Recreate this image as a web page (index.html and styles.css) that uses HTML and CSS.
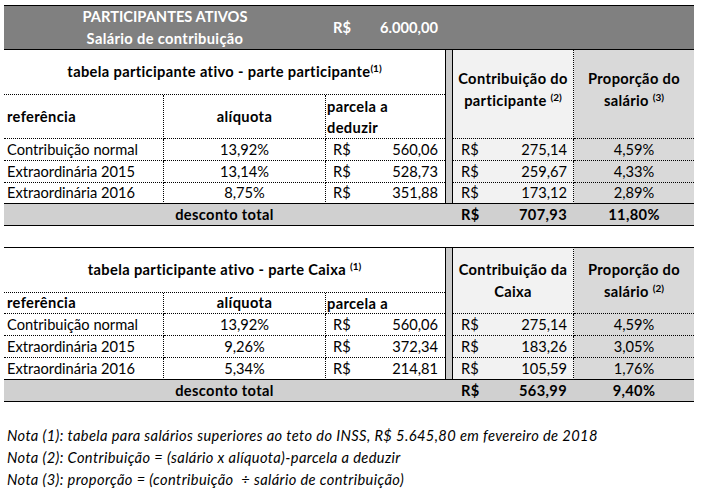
FILE: index.html
```html
<!DOCTYPE html>
<html lang="pt-BR">
<head>
<meta charset="utf-8">
<title>Participantes ativos</title>
<link rel="stylesheet" href="styles.css">
</head>
<body>
<div class="page">
  <div class="sheet t1">
    <div class="c band r1 span-ab center"><span>PARTICIPANTES ATIVOS<br><span class="wide">Salário de contribuição</span></span></div>
    <div class="c band r1 col-c money"><span>R$</span><span>6.000,00</span></div>
    <div class="c band r1 span-rest"></div>

    <div class="c r2 span-abc center bold dot-b"><span>tabela participante ativo - parte participante<sup class="ref">(1)</sup></span></div>
    <div class="c sep rows-2-7"></div>
    <div class="c col-d rows-2-4 head-d up center bold"><span>Contribuição do<br>participante <sup class="ref">(2)</sup></span></div>
    <div class="c col-e rows-2-4 head-e up center bold"><span>Proporção do<br>salário <sup class="ref">(3)</sup></span></div>

    <div class="c r3 col-a lbl bold dot-r dot-b">referência</div>
    <div class="c r3 col-b center bold dot-r dot-b">alíquota</div>
    <div class="c r3 col-c par bold dot-b"><span>parcela a<br>deduzir</span></div>

    <div class="c r4 col-a lbl dot-r dot-b">Contribuição normal</div>
    <div class="c r4 col-b center dot-r dot-b">13,92%</div>
    <div class="c r4 col-c money dot-b"><span>R$</span><span>560,06</span></div>
    <div class="c r4 col-d money2 dot-b"><span>R$</span><span>275,14</span></div>
    <div class="c r4 col-e prop dot-b">4,59%</div>

    <div class="c r5 col-a lbl dot-r dot-b">Extraordinária 2015</div>
    <div class="c r5 col-b center dot-r dot-b">13,14%</div>
    <div class="c r5 col-c money dot-b"><span>R$</span><span>528,73</span></div>
    <div class="c r5 col-d money2 dot-b"><span>R$</span><span>259,67</span></div>
    <div class="c r5 col-e prop dot-b">4,33%</div>

    <div class="c r6 col-a lbl dot-r solid-b">Extraordinária 2016</div>
    <div class="c r6 col-b center dot-r solid-b">8,75%</div>
    <div class="c r6 col-c money solid-b"><span>R$</span><span>351,88</span></div>
    <div class="c r6 col-d money2 solid-b"><span>R$</span><span>173,12</span></div>
    <div class="c r6 col-e prop solid-b">2,89%</div>

    <div class="c tot r7 span-abc center">desconto total</div>
    <div class="c tot r7 col-sep"></div>
    <div class="c tot r7 col-d money2t"><span>R$</span><span>707,93</span></div>
    <div class="c tot r7 col-e center">11,80%</div>
  </div>

  <div class="sheet t2">
    <div class="c r1 span-abc center bold dot-b top"><span>tabela participante ativo - parte Caixa <sup class="ref">(1)</sup></span></div>
    <div class="c sep rows-1-6 top"></div>
    <div class="c col-d rows-1-3 head-d center bold top"><span>Contribuição da<br>Caixa</span></div>
    <div class="c col-e rows-1-3 head-e center bold top"><span>Proporção do<br>salário <sup class="ref">(2)</sup></span></div>

    <div class="c r2 col-a lbl bold dot-r dot-b">referência</div>
    <div class="c r2 col-b center bold dot-r dot-b">alíquota</div>
    <div class="c r2 col-c par bold dot-b">parcela a</div>

    <div class="c r3 col-a lbl dot-r dot-b">Contribuição normal</div>
    <div class="c r3 col-b center dot-r dot-b">13,92%</div>
    <div class="c r3 col-c money dot-b"><span>R$</span><span>560,06</span></div>
    <div class="c r3 col-d money2 dot-b"><span>R$</span><span>275,14</span></div>
    <div class="c r3 col-e prop dot-b">4,59%</div>

    <div class="c r4 col-a lbl dot-r dot-b">Extraordinária 2015</div>
    <div class="c r4 col-b center dot-r dot-b">9,26%</div>
    <div class="c r4 col-c money dot-b"><span>R$</span><span>372,34</span></div>
    <div class="c r4 col-d money2 dot-b"><span>R$</span><span>183,26</span></div>
    <div class="c r4 col-e prop dot-b">3,05%</div>

    <div class="c r5 col-a lbl dot-r solid-b">Extraordinária 2016</div>
    <div class="c r5 col-b center dot-r solid-b">5,34%</div>
    <div class="c r5 col-c money solid-b"><span>R$</span><span>214,81</span></div>
    <div class="c r5 col-d money2 solid-b"><span>R$</span><span>105,59</span></div>
    <div class="c r5 col-e prop solid-b">1,76%</div>

    <div class="c tot r6 span-abc center">desconto total</div>
    <div class="c tot r6 col-sep"></div>
    <div class="c tot r6 col-d money2t"><span>R$</span><span>563,99</span></div>
    <div class="c tot r6 col-e center">9,40%</div>
  </div>

  <div class="notes">
    <p>Nota (1): tabela para salários superiores ao teto do INSS, R$ 5.645,80 em fevereiro de 2018</p>
    <p>Nota (2): Contribuição = (salário x alíquota)-parcela a deduzir</p>
    <p>Nota (3): proporção = (contribuição &nbsp;÷ salário de contribuição)</p>
  </div>
</div>
</body>
</html>
```

FILE: styles.css
```css
html, body {
  margin: 0;
  padding: 0;
  background: #ffffff;
}

body {
  font-family: Lato, "Liberation Sans", Arial, sans-serif;
  font-size: 14.67px;
  color: #000000;
}

.page {
  padding: 5px 0 0 4px;
}

.sheet {
  display: grid;
  grid-template-columns: 160px 162px 119px 8px 121px 120px;
  width: 690px;
}

.t1 {
  grid-template-rows: 45px 45px 44px 22px 22px 21px 22px;
}

.t2 {
  grid-template-rows: 46px 21px 22px 22px 22px 22px;
  margin-top: 21px;
}

.c {
  box-sizing: border-box;
  display: flex;
  align-items: center;
  overflow: hidden;
  white-space: nowrap;
  line-height: 22px;
}

/* rows */
.r1 { grid-row: 1; }
.r2 { grid-row: 2; }
.r3 { grid-row: 3; }
.r4 { grid-row: 4; }
.r5 { grid-row: 5; }
.r6 { grid-row: 6; }
.r7 { grid-row: 7; }
.rows-2-7 { grid-row: 2 / 7; }
.rows-2-4 { grid-row: 2 / 4; }
.rows-1-6 { grid-row: 1 / 6; }
.rows-1-3 { grid-row: 1 / 3; }

/* columns */
.col-a { grid-column: 1; }
.col-b { grid-column: 2; }
.col-c { grid-column: 3; }
.col-sep { grid-column: 4; }
.col-d { grid-column: 5; }
.col-e { grid-column: 6; }
.span-ab { grid-column: 1 / 3; }
.span-abc { grid-column: 1 / 4; }
.span-rest { grid-column: 4 / 7; }

.center {
  justify-content: center;
  text-align: center;
}

.bold {
  font-weight: 700;
  letter-spacing: 0.35px;
}

.dot-b { border-bottom: 1px dotted #000; }
.dot-r { border-right: 1px dotted #000; }
.solid-b { border-bottom: 1px solid #000; }
.top { border-top: 1px solid #000; }

.band {
  background: #808080;
  color: #ffffff;
  font-weight: 700;
  border-top: 1px solid #000;
  border-bottom: 1px solid #000;
}

.wide {
  letter-spacing: 0.35px;
}

.sep {
  grid-column: 4;
  background: #cacaca;
  border-left: 1px solid #000;
  border-right: 1px solid #000;
  border-bottom: 1px solid #000;
}

.head-d {
  background: #f2f2f2;
  border-right: 1px dotted #000;
  border-bottom: 1px dotted #000;
}

.head-e {
  background: #d9d9d9;
  border-bottom: 1px dotted #000;
}

.up {
  padding-bottom: 8px;
}

.lbl {
  padding-left: 3px;
}

.par {
  padding-left: 1px;
  line-height: 21px;
}

.money {
  justify-content: space-between;
  padding: 0 7px 0 7px;
}

.money2 {
  justify-content: space-between;
  padding: 0 6px 0 8px;
  background: #f2f2f2;
  border-right: 1px dotted #000;
}

.money2t {
  justify-content: space-between;
  padding: 0 7px 0 8px;
}

.prop {
  justify-content: center;
  background: #d9d9d9;
}

.tot {
  background: #d0d0d0;
  font-weight: 700;
  letter-spacing: 0.35px;
  border-bottom: 1px solid #000;
}

.ref {
  font-size: 10px;
  line-height: 0;
  letter-spacing: 0;
  vertical-align: 5px;
}

.notes {
  margin-top: 23px;
  padding-left: 3px;
  font-style: italic;
  letter-spacing: 0.38px;
}

.notes p {
  margin: 0;
  line-height: 22px;
  white-space: nowrap;
}
```
